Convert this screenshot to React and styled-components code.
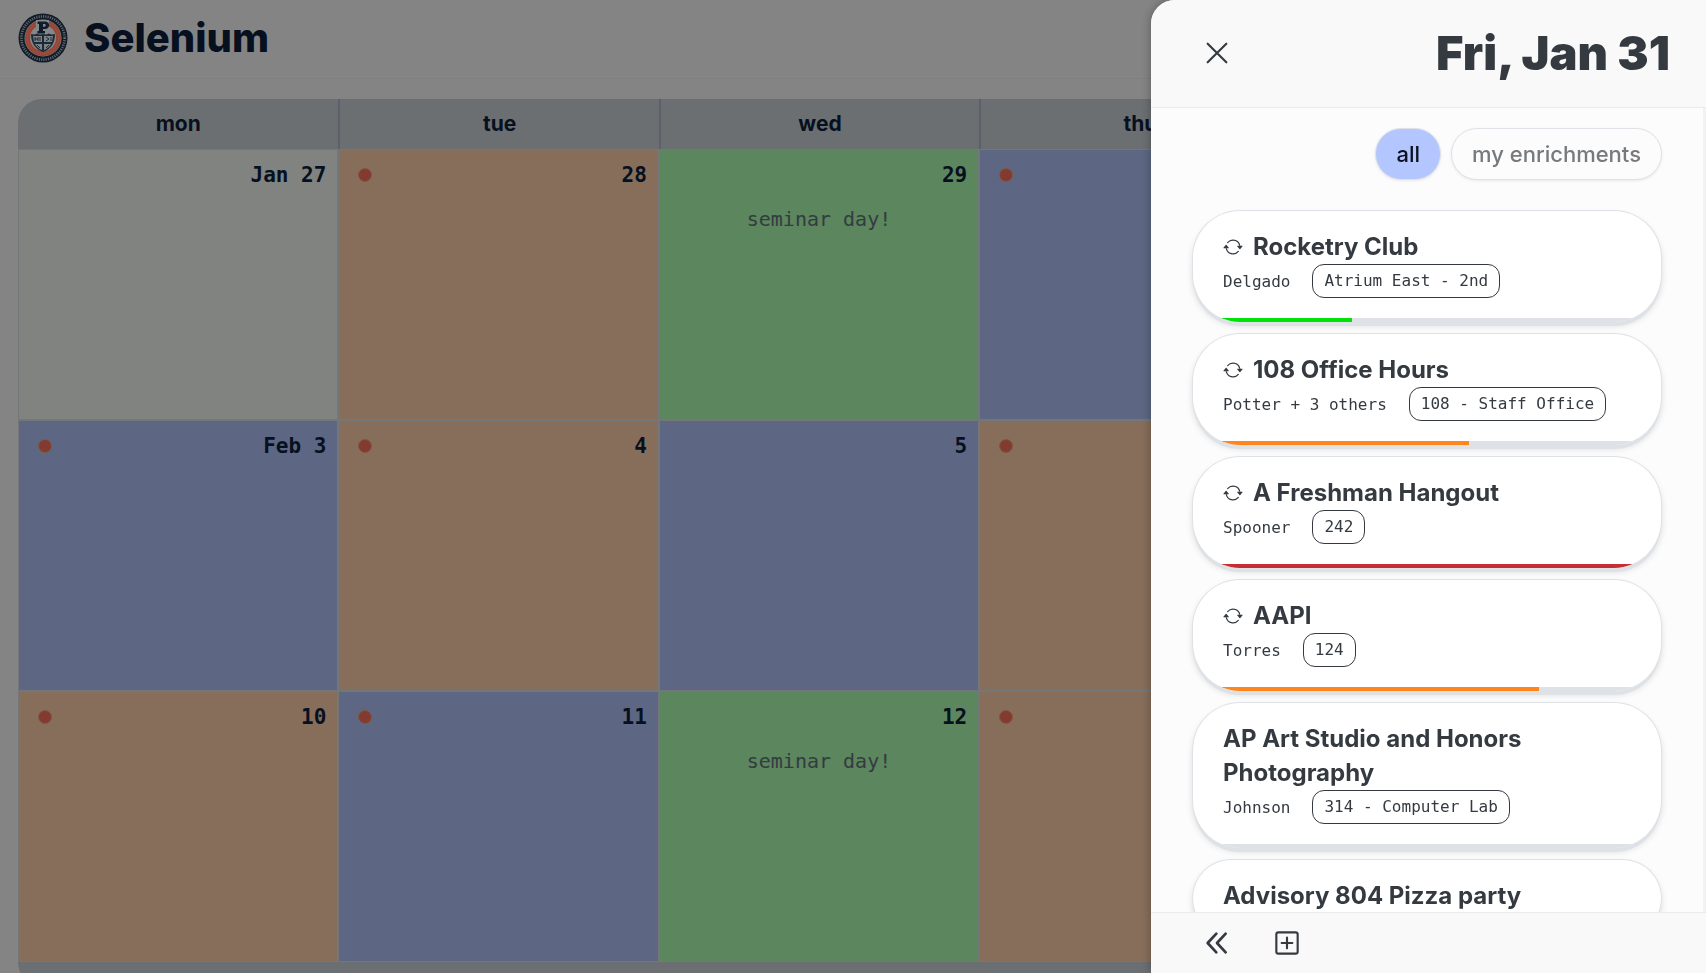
import React from "react";
import styled, { createGlobalStyle } from "styled-components";
import { BsArrowRepeat } from "react-icons/bs";

const sans = `Inter, "Liberation Sans", sans-serif`;
const mono = `"DejaVu Sans Mono", "Liberation Mono", monospace`;

const Global = createGlobalStyle`
  * { box-sizing: border-box; }
  body { margin: 0; font-family: ${sans}; background: #848484; color: #07101f; overflow: hidden; }
  h1, h2, h3, p { margin: 0; }
  button { font: inherit; color: inherit; cursor: pointer; padding: 0; border: 0; background: none; }
`;

const Page = styled.div`
  height: 100vh;
  display: flex;
  flex-direction: column;
`;

const TopBar = styled.header`
  flex: none;
  display: flex;
  align-items: center;
  gap: 16px;
  height: 79px;
  padding: 0 18px 3px;
  border-bottom: 1px solid #7f7f7f;
`;

const Brand = styled.h1`
  font-size: 40px;
  line-height: 48px;
  font-weight: 800;
`;

const Calendar = styled.table`
  flex: none;
  display: block;
  margin: 20px 86px 0 18px;
  border-radius: 24px;
  overflow: hidden;
  background: #6b6f71;
  padding-bottom: 24px;
  thead, tbody { display: block; }
`;

const WeekRow = styled.tr`
  display: grid;
  grid-template-columns: repeat(5, 1fr);
`;

const DayName = styled.th`
  height: 50px;
  font-size: 21px;
  line-height: 50px;
  font-weight: 700;
  padding: 0;
  & + & { border-left: 2px solid #5c606a; }
`;

const fills = { none: "#808380", orange: "#876e5b", green: "#5b865e", blue: "#5d6783" };

const Cell = styled.td`
  height: 271px;
  padding: 11px 11px 0;
  font-family: ${mono};
  background: ${(p) => fills[p.$tone]};
  border: 1px solid #74777a;
`;

const CellHead = styled.div`
  display: flex;
  align-items: center;
  padding-left: 8px;
  font-size: 21px;
  line-height: 28px;
  font-weight: 700;
`;

const DateLabel = styled.span`
  margin-left: auto;
`;

const Dot = styled.span`
  width: 14px;
  height: 14px;
  border-radius: 50%;
  background: #833a30;
  border: 1px solid #80593f;
`;

const Note = styled.p`
  margin-top: 16px;
  text-align: center;
  font-size: 20px;
  line-height: 28px;
  color: #343b41;
`;

const Drawer = styled.aside`
  position: fixed;
  inset: 0 0 0 auto;
  width: 555px;
  max-width: 100%;
  display: flex;
  flex-direction: column;
  overflow: hidden;
  border-radius: 24px 0 0 0;
  background: #fcfcfc;
  color: #343a40;
  box-shadow: 0 0 10px rgba(0, 0, 0, 0.3);
`;

const DrawerHead = styled.header`
  flex: none;
  display: flex;
  align-items: center;
  justify-content: space-between;
  height: 108px;
  padding: 0 36px 2px 48px;
  background: #f9f9f9;
  border-bottom: 1px solid #e9ebed;
`;

const DrawerTitle = styled.h2`
  font-size: 47px;
  line-height: 56px;
  font-weight: 900;
`;

const IconButton = styled.button`
  display: grid;
  place-items: center;
  width: 36px;
  height: 36px;
`;

const DrawerBody = styled.div`
  position: relative;
  flex: 1;
  min-height: 0;
  overflow: hidden;
  padding: 20px 41px 0;
  border-right: 3px solid #f1f2f3;
`;

const ScrollThumb = styled.div`
  position: absolute;
  top: 2px;
  right: -3px;
  width: 2px;
  height: 68px;
  background: #dee2e6;
`;

const Filters = styled.div`
  display: flex;
  justify-content: flex-end;
  gap: 10px;
  margin-bottom: 30px;
`;

const Pill = styled.button`
  height: 52px;
  padding: 0 20px;
  border: 1px solid #dee2e6;
  border-radius: 26px;
  font-size: 22px;
  font-weight: 500;
  background: ${(p) => (p.$active ? "#b4c6ff" : "#fcfcfc")};
  color: ${(p) => (p.$active ? "#0b1120" : "#777a7d")};
  box-shadow: 0 1px 3px rgba(0, 0, 0, 0.08);
`;

const List = styled.ul`
  display: flex;
  flex-direction: column;
  gap: 11px;
  margin: 0;
  padding: 0;
  list-style: none;
`;

const Card = styled.li`
  overflow: hidden;
  border: 1px solid #dee2e6;
  border-bottom: 0;
  border-radius: 48px;
  background: #fff;
  box-shadow: 0 5px 0 -1px #dee2e6, 0 4px 6px rgba(0, 0, 0, 0.12);
`;

const CardContent = styled.div`
  padding: 19px 30px 20px;
`;

const CardTitle = styled.h3`
  display: flex;
  align-items: center;
  gap: 10px;
  font-size: 24px;
  line-height: 34px;
  font-weight: 700;
  svg { flex: none; }
`;

const Meta = styled.div`
  display: flex;
  align-items: center;
  gap: 22px;
  font-family: ${mono};
  font-size: 16px;
`;

const Room = styled.span`
  height: 34px;
  padding: 0 11px;
  border: 1px solid #343a40;
  border-radius: 12px;
  line-height: 32px;
`;

const Track = styled.div`
  height: 4px;
  background: #dee2e6;
`;

const Fill = styled.div`
  height: 4px;
  background: ${(p) => p.$color};
`;

const DrawerFoot = styled.footer`
  flex: none;
  display: flex;
  align-items: center;
  gap: 34px;
  height: 61px;
  padding: 0 48px;
  background: #f9f9f9;
  border-top: 1px solid #e9ebed;
`;

const Seal = () => (
  <svg width="50" height="50" viewBox="0 0 50 50" role="img" aria-label="School seal">
    <circle cx="25" cy="25" r="24.5" fill="#111c2a" />
    <circle cx="25" cy="25" r="21.6" fill="none" stroke="#666b6e" strokeWidth="2.6" strokeDasharray="1.1 1.2" />
    <circle cx="25" cy="25" r="18.5" fill="#8a8782" />
    <circle cx="25" cy="25" r="15.5" fill="none" stroke="#964638" strokeWidth="5" />
    <circle cx="25" cy="25" r="15.5" fill="none" stroke="#a8654f" strokeWidth="0.8" strokeDasharray="1 1" />
    <circle cx="25" cy="25" r="12.5" fill="#858789" />
    <path d="M18 7h13v14h-13z" fill="#858789" />
    <path fillRule="evenodd" d="M19.500 8.500H27c5.500 0 5.500 7.500 0 7.500h-2v2h2v2.500h-7.500V18h1.500v-7h-1.500zM25 11v2.700h1.500c1.700 0 1.700-2.700 0-2.700z" fill="#111c2a" />
    <path d="M13 21q4 1 6-.5 3 1.500 6 .500 3 1 6-.5 2 1.500 6 .500c0 9-4 15-12 18C17 36 13 30 13 21z" fill="#1c2938" />
    <path d="M15 23h9v6h-8zM26 23h9l-1 6h-8zM17 31h7v6q-5-2-7-6zM26 31h7q-2 4-7 6z" fill="#7c8385" />
    <path d="M17 24v4M20 24v4M17 26h3M22 24v4M28 24l3 2-3 2M33 24v4M19 32l3 3M28 35l3-3" stroke="#1c2938" strokeWidth="1" fill="none" />
  </svg>
);

const Stroke = ({ size, children, width = 2 }) => (
  <svg width={size} height={size} viewBox="0 0 24 24" fill="none" stroke="currentColor" strokeWidth={width} strokeLinecap="round" strokeLinejoin="round" aria-hidden="true">
    {children}
  </svg>
);

const days = ["mon", "tue", "wed", "thu", "fri"];
const weeks = [
  [["Jan 27", "none"], ["28", "orange", true], ["29", "green", false, "seminar day!"], ["30", "blue", true], ["31", "orange", true]],
  [["Feb 3", "blue", true], ["4", "orange", true], ["5", "blue"], ["6", "orange", true], ["7", "blue", true]],
  [["10", "orange", true], ["11", "blue", true], ["12", "green", false, "seminar day!"], ["13", "orange", true], ["14", "blue", true]],
];
const events = [
  { title: "Rocketry Club", host: "Delgado", room: "Atrium East - 2nd", repeat: true, full: 34, color: "#00e10b" },
  { title: "108 Office Hours", host: "Potter + 3 others", room: "108 - Staff Office", repeat: true, full: 59, color: "#ff861c" },
  { title: "A Freshman Hangout", host: "Spooner", room: "242", repeat: true, full: 100, color: "#c62f31" },
  { title: "AAPI", host: "Torres", room: "124", repeat: true, full: 74, color: "#ff861c" },
  { title: "AP Art Studio and Honors Photography", host: "Johnson", room: "314 - Computer Lab", full: 0 },
  { title: "Advisory 804 Pizza party", full: 0 },
];

export default function App() {
  return (
    <>
      <Global />
      <Page>
        <TopBar>
          <Seal />
          <Brand>Selenium</Brand>
        </TopBar>
        <Calendar>
          <thead>
            <WeekRow>{days.map((d) => <DayName key={d}>{d}</DayName>)}</WeekRow>
          </thead>
          <tbody>
            {weeks.map((week, i) => (
              <WeekRow key={i}>
                {week.map(([date, tone, dot, note]) => (
                  <Cell key={date} $tone={tone}>
                    <CellHead>
                      {dot && <Dot />}
                      <DateLabel>{date}</DateLabel>
                    </CellHead>
                    {note && <Note>{note}</Note>}
                  </Cell>
                ))}
              </WeekRow>
            ))}
          </tbody>
        </Calendar>
      </Page>
      <Drawer>
        <DrawerHead>
          <IconButton aria-label="Close">
            <Stroke size={32} width={1.6}><path d="M5 5l14 14M19 5L5 19" /></Stroke>
          </IconButton>
          <DrawerTitle>Fri, Jan 31</DrawerTitle>
        </DrawerHead>
        <DrawerBody>
          <ScrollThumb />
          <Filters>
            <Pill $active>all</Pill>
            <Pill>my enrichments</Pill>
          </Filters>
          <List>
            {events.map((e) => (
              <Card key={e.title}>
                <CardContent>
                  <CardTitle>{e.repeat && <BsArrowRepeat size={20} />}{e.title}</CardTitle>
                  {e.host && <Meta>{e.host}<Room>{e.room}</Room></Meta>}
                </CardContent>
                <Track><Fill $color={e.color} style={{ width: `${e.full}%` }} /></Track>
              </Card>
            ))}
          </List>
        </DrawerBody>
        <DrawerFoot>
          <IconButton aria-label="Previous day">
            <Stroke size={32}><path d="M11.500 5l-6.500 7 6.500 7M18.500 5l-6.500 7 6.500 7" /></Stroke>
          </IconButton>
          <IconButton aria-label="Add enrichment">
            <Stroke size={32} width={1.6}><rect x="4" y="4" width="16" height="16" rx="1.500" /><path d="M12 8v8M8 12h8" /></Stroke>
          </IconButton>
        </DrawerFoot>
      </Drawer>
    </>
  );
}
